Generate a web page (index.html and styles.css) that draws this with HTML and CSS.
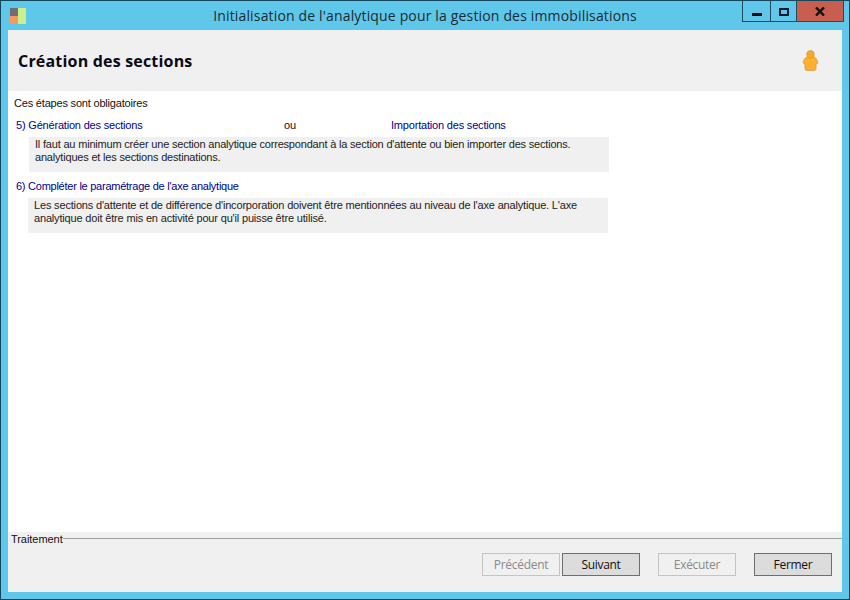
FILE: index.html
```html
<!DOCTYPE html>
<html lang="fr">
<head>
<meta charset="utf-8">
<title>Initialisation de l'analytique</title>
<link rel="stylesheet" href="styles.css">
</head>
<body>
<div class="window">
  <div class="titlebar">
    <svg class="appicon" width="16" height="16" viewBox="0 0 16 16">
      <rect x="0" y="0" width="8" height="8" fill="#6f6f6f"/>
      <rect x="0" y="8" width="8" height="8" fill="#f79860"/>
      <rect x="8" y="0" width="8" height="16" fill="#c8f08c"/>
    </svg>
    <div class="title">Initialisation de l'analytique pour la gestion des immobilisations</div>
    <div class="controls">
      <div class="ctl ctl-min"><span class="min-glyph"></span></div>
      <div class="ctl ctl-max"><span class="max-glyph"></span></div>
      <div class="ctl ctl-close"><svg width="10" height="9" viewBox="0 0 10 9"><path d="M1 0.5L9 8.5M9 0.5L1 8.5" stroke="#111" stroke-width="2.4" fill="none"/></svg></div>
    </div>
  </div>
  <div class="client">
    <div class="header">
      <h1 class="heading">Création des sections</h1>
      <svg class="person" width="17" height="21" viewBox="0 0 17 21">
        <path d="M5.5 6.5C4.3 7 2.2 8.5 1.4 11.5C1 13 1.6 14 3 14.3V18.8C3 19.8 3.6 20.4 4.6 20.4H12.4C13.4 20.4 14 19.8 14 18.8V14.3C15.4 14 16 13 15.6 11.5C14.8 8.5 12.7 7 11.5 6.5Z" fill="#fdb02e" stroke="#c9963c" stroke-width="0.7"/>
        <circle cx="8.5" cy="4.3" r="3.8" fill="#f9a72a" stroke="#c9963c" stroke-width="0.6"/>
      </svg>
    </div>
    <div class="content">
      <p class="intro">Ces étapes sont obligatoires</p>
      <div class="linkrow">
        <a class="link link-a">5) Génération des sections</a>
        <span class="ou">ou</span>
        <a class="link link-b">Importation des sections</a>
      </div>
      <p class="desc desc-first">Il faut au minimum créer une section analytique correspondant à la section d'attente ou bien importer des sections.<br>analytiques et les sections destinations.</p>
      <div class="linkrow linkrow-second">
        <a class="link">6) Compléter le paramétrage de l'axe analytique</a>
      </div>
      <p class="desc desc-second">Les sections d'attente et de différence d'incorporation doivent être mentionnées au niveau de l'axe analytique. L'axe<br>analytique doit être mis en activité pour qu'il puisse être utilisé.</p>
    </div>
    <div class="footer">
      <div class="legend"><span class="legend-text">Traitement</span><span class="legend-rule"></span></div>
      <div class="buttons">
        <button class="btn btn-disabled">Précédent</button>
        <button class="btn btn-next">Suivant</button>
        <button class="btn btn-disabled btn-exec">Exécuter</button>
        <button class="btn btn-close">Fermer</button>
      </div>
    </div>
  </div>
</div>
</body>
</html>
```
FILE: styles.css
```css
* { box-sizing: border-box; }
html, body { margin: 0; padding: 0; }
body { width: 850px; height: 600px; overflow: hidden; font-family: "Liberation Sans", Arial, sans-serif; }
.window {
  width: 850px; height: 600px;
  background: #5fc8ea;
  border: 1px solid #14465c;
  display: flex; flex-direction: column;
  padding: 0 7px 7px;
}
.titlebar { height: 29px; flex: none; display: flex; position: relative; }
.appicon { margin: 7px 0 0 2px; flex: none; }
.title {
  flex: 1; text-align: center;
  font: 14px/30px "Open Sans", sans-serif;
  color: #1b2a33;
  padding-right: 18px;
  letter-spacing: 0.16px;
}
.controls {
  position: absolute; right: -2px; top: 0;
  display: flex; height: 21px;
  border: 1px solid #254a5c; border-top: 0;
}
.ctl { height: 20px; display: flex; align-items: center; justify-content: center; }
.ctl-min { width: 28px; border-right: 1px solid #254a5c; }
.ctl-max { width: 26px; border-right: 1px solid #254a5c; }
.ctl-close { width: 46px; background: #c75e50; }
.min-glyph { width: 10px; height: 3px; background: #0c1015; margin-top: 7px; }
.max-glyph { width: 10px; height: 8px; border: 2px solid #0c1a30; margin-top: 1px; }
.client { flex: 1; display: flex; flex-direction: column; background: #fff; min-height: 0; }
.header {
  height: 61px; flex: none; background: #f0f0f0;
  display: flex; align-items: center; justify-content: space-between;
  padding: 0 23px 0 10px;
}
.heading { margin: 0; font: bold 16px "Open Sans", sans-serif; color: #0a0a14; letter-spacing: 0.19px; }
.content { flex: 1; padding: 6px 0 0 6px; font-size: 11px; line-height: 13px; color: #111; letter-spacing: -0.19px; }
.intro { margin: 0; height: 13px; line-height: 13px; }
.linkrow { display: flex; margin: 9px 0 0 2px; height: 13px; }
.linkrow-second { margin-top: 8px; letter-spacing: -0.25px; }
.link { color: #00008b; }
.link-a { width: 268px; }
.ou { width: 107px; }
.desc {
  margin: 5px 0 0 15px; width: 580px; height: 35px;
  background: #f0f0f0; padding: 1px 0 0 6px; color: #222;
}
.desc-second { margin-left: 14px; letter-spacing: -0.17px; }
.footer { height: 60px; flex: none; background: #f0f0f0; display: flex; flex-direction: column; }
.legend { display: flex; align-items: center; height: 13px; font-size: 11px; padding-left: 3px; color: #111; letter-spacing: -0.05px; }
.legend-rule { flex: 1; height: 1px; background: #a0a0a0; }
.buttons { display: flex; margin: 8px 0 0 474px; }
.btn {
  width: 78px; height: 23px; padding: 0;
  font: 12px "Open Sans", sans-serif;
  letter-spacing: -0.3px;
  background: #dcdcdc; border: 1px solid #6e6e6e; color: #111;
}
.btn-disabled { background: #f0f0f0; border-color: #c4c4c4; color: #8a8a8a; }
.btn-next { margin-left: 2px; }
.btn-exec { margin-left: 18px; }
.btn-close { margin-left: 18px; }
```
